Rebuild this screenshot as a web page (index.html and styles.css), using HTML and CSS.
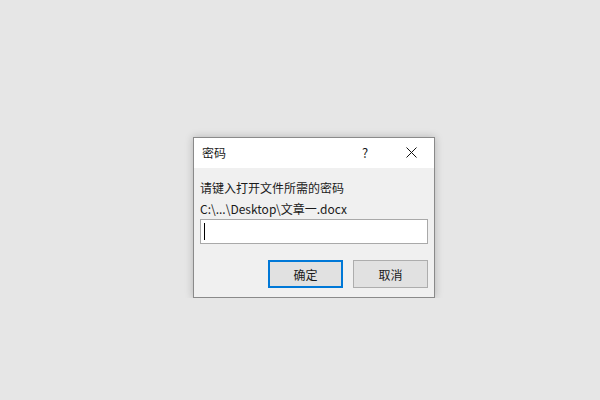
FILE: index.html
```html
<!DOCTYPE html>
<html lang="zh-CN">
<head>
    <meta charset="UTF-8">
    <title>密码</title>
    <link rel="stylesheet" href="styles.css">
</head>
<body>
    <div class="dialog">
        <div class="titlebar">
            <span class="title">密码</span>
            <span class="help">?</span>
            <span class="close">
                <svg width="11" height="11" viewBox="0 0 11 11">
                    <path d="M0.5 0.5 L10.5 10.5 M10.5 0.5 L0.5 10.5" stroke="#111" stroke-width="1" fill="none"/>
                </svg>
            </span>
        </div>
        <div class="content">
            <p class="line">请键入打开文件所需的密码</p>
            <p class="line">C:\...\Desktop\文章一.docx</p>
            <div class="field"><span class="caret"></span></div>
            <div class="buttons">
                <button type="button" class="btn primary">确定</button>
                <button type="button" class="btn">取消</button>
            </div>
        </div>
    </div>
</body>
</html>
```

FILE: styles.css
```css
body {
    margin: 0;
    padding: 137px 0 0 193px;
    background-color: #e6e6e6;
    font-family: "Noto Sans CJK SC", "Liberation Sans", sans-serif;
    font-size: 12px;
    color: #1a1a1a;
}

.dialog {
    width: 240px;
    border: 1px solid #8a8a8a;
    background-color: #f0f0f0;
    box-shadow: 0 0 8px rgba(0, 0, 0, 0.22);
}

.titlebar {
    display: flex;
    align-items: center;
    height: 29px;
    padding-bottom: 1px;
    background-color: #fff;
}

.title {
    flex: 1;
    padding-left: 8px;
}

.help {
    width: 12px;
    margin-right: 35px;
    text-align: center;
    font-size: 13px;
}

.close {
    display: flex;
    width: 11px;
    margin-right: 17px;
}

.content {
    padding: 9px 6px 9px 6px;
}

.line {
    margin: 0;
    line-height: 21px;
}

.field {
    display: flex;
    align-items: center;
    height: 23px;
    padding-left: 3px;
    border: 1px solid #a9a9a9;
    background-color: #fff;
}

.caret {
    width: 1px;
    height: 17px;
    background-color: #000;
}

.buttons {
    display: flex;
    justify-content: flex-end;
    gap: 10px;
    margin-top: 16px;
}

.btn {
    width: 75px;
    height: 28px;
    border: 1px solid #adadad;
    background-color: #e1e1e1;
    font-family: inherit;
    font-size: 12px;
    color: #1a1a1a;
    padding: 0;
}

.btn.primary {
    border: 2px solid #0078d7;
}
```
